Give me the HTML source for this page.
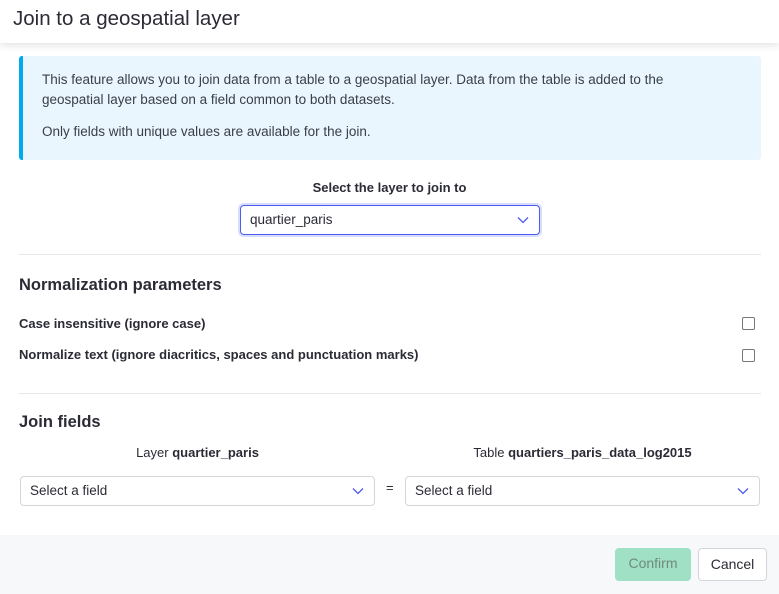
<!DOCTYPE html>
<html><head><style>
*{box-sizing:border-box;margin:0;padding:0}
body{width:779px;height:594px;overflow:hidden;background:#fff;font-family:"Liberation Sans",sans-serif;color:#2b2b36;position:relative}
.hdr{position:absolute;left:0;top:0;width:779px;height:43px;background:#fff;box-shadow:0 2px 8px rgba(0,0,0,.12);z-index:2}
.hdr h1{position:absolute;left:13px;top:7px;font-size:20.5px;font-weight:normal;color:#2b2b36}
.info{position:absolute;left:19px;top:56px;width:742px;height:104px;background:#e9f6fd;border-left:4px solid #00aaf0;border-radius:3px;font-size:13.5px;line-height:20px;color:#3a3d4a;padding:14px 60px 0 19px}
.t{position:absolute;font-size:13.5px}
.b{font-weight:bold}
.sel{position:absolute;height:30px;border:1px solid #d4d6dc;border-radius:4px;font-size:13.5px;padding:6px 9px;color:#2b2b36}
.sel svg{position:absolute;right:10px;top:10px}
hr{position:absolute;left:19px;width:742px;border:0;border-top:1px solid #e6e7ea}
.cb{position:absolute;left:742px;width:13px;height:13px;border:1.5px solid #777;border-radius:2px}
.foot{position:absolute;left:0;top:535px;width:779px;height:59px;background:#f7f8fa}
.btn{position:absolute;top:548px;height:33px;border-radius:4px;font-size:14px;text-align:center;line-height:31px}
</style></head><body>
<div class="hdr"><h1>Join to a geospatial layer</h1></div>
<div class="info">This feature allows you to join data from a table to a geospatial layer. Data from the table is added to the geospatial layer based on a field common to both datasets.<div style="margin-top:12px">Only fields with unique values are available for the join.</div></div>
<div class="t b" style="left:0;width:779px;text-align:center;top:180px;font-size:13px">Select the layer to join to</div>
<div class="sel" style="left:240px;top:205px;width:300px;border-color:#4b5cf0;box-shadow:0 0 0 2px #d9ddfc">quartier_paris<svg width="12" height="8" viewBox="0 0 12 8"><path d="M1 1.5l5 5 5-5" fill="none" stroke="#4b5cf0" stroke-width="1.3"/></svg></div>
<hr style="top:254px">
<div class="t b" style="left:19px;top:276px;font-size:16.5px">Normalization parameters</div>
<div class="t b" style="left:19px;top:316px;font-size:13px">Case insensitive (ignore case)</div>
<div class="cb" style="top:317px"></div>
<div class="t b" style="left:19px;top:347px;font-size:13px">Normalize text (ignore diacritics, spaces and punctuation marks)</div>
<div class="cb" style="top:349px"></div>
<hr style="top:393px">
<div class="t b" style="left:19px;top:413px;font-size:16.5px">Join fields</div>
<div class="t" style="left:20px;width:355px;text-align:center;top:445px;font-size:13px">Layer <b>quartier_paris</b></div>
<div class="t" style="left:405px;width:355px;text-align:center;top:445px;font-size:13px">Table <b>quartiers_paris_data_log2015</b></div>
<div class="sel" style="left:20px;top:476px;width:355px">Select a field<svg width="12" height="8" viewBox="0 0 12 8"><path d="M1 1.5l5 5 5-5" fill="none" stroke="#4b5cf0" stroke-width="1.3"/></svg></div>
<div class="t" style="left:386px;top:480px;font-size:13px">=</div>
<div class="sel" style="left:405px;top:476px;width:355px">Select a field<svg width="12" height="8" viewBox="0 0 12 8"><path d="M1 1.5l5 5 5-5" fill="none" stroke="#4b5cf0" stroke-width="1.3"/></svg></div>
<div class="foot"></div>
<div class="btn" style="left:615px;width:76px;background:#a0e0c5;color:#6e8a7e">Confirm</div>
<div class="btn" style="left:698px;width:69px;background:#fff;border:1px solid #d4d6dc;color:#2b2b36">Cancel</div>
</body></html>
